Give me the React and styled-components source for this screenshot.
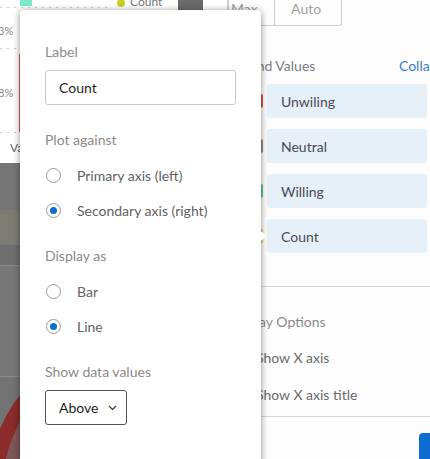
import React from 'react';
import styled, { createGlobalStyle } from 'styled-components';

const GlobalStyle = createGlobalStyle`
  html, body {
    margin: 0;
    padding: 0;
    background: #fff;
  }
  body {
    font-family: Lato, "Noto Sans", "Liberation Sans", sans-serif;
    font-size: 14px;
  }
`;

const Page = styled.div`
  position: relative;
  width: 430px;
  height: 459px;
  overflow: hidden;
  display: grid;
  grid-template-columns: 228px 223px;
  background: #fdfdfd;
`;

const ChartPanel = styled.div`
  display: flex;
  flex-direction: column;
  background: #fff;
`;

const ChartTop = styled.svg`
  display: block;
  width: 228px;
  height: 163px;
  flex: none;
`;

const Dimmed = styled.div`
  flex: 1;
  display: flex;
  flex-direction: column;
  background: #7a7a7a;
`;

const Band = styled.div`
  height: ${p => p.h}px;
  background: ${p => p.c};
  border-bottom: ${p => (p.line ? '1px solid #8a8a8a' : 'none')};
`;

const DonutArea = styled.svg`
  display: block;
  flex: 1;
  width: 228px;
  background: #737373;
`;

const Sidebar = styled.div`
  display: flex;
  flex-direction: column;
  background: #fdfdfd;
  color: #6a6a6a;
`;

const RangeGroup = styled.div`
  display: flex;
  width: 114px;
  height: 26px;
  border: 1px solid #cfcfcf;
  border-top: none;
  border-radius: 0 0 3px 3px;
  box-sizing: border-box;
`;

const RangeCell = styled.div`
  width: ${p => p.w}px;
  box-sizing: border-box;
  padding-left: ${p => p.pl}px;
  line-height: 18px;
  color: #a0a0a0;
  border-right: ${p => (p.divider ? '1px solid #cfcfcf' : 'none')};
`;

const SectionHeader = styled.div`
  display: flex;
  justify-content: space-between;
  align-items: center;
  height: 20px;
  margin-top: 29px;
  color: #7d7d7d;
`;

const LinkText = styled.span`
  color: #3a7fc6;
`;

const LegendList = styled.div`
  display: flex;
  flex-direction: column;
  gap: 11px;
  margin-top: 9px;
  margin-right: 24px;
`;

const LegendRow = styled.div`
  display: flex;
  align-items: center;
  gap: 4px;
  padding-left: 27px;
`;

const Swatch = styled.div`
  width: 8px;
  height: 14px;
  border-radius: 2px;
  background: ${p => p.c};
`;

const LegendItem = styled.div`
  flex: 1;
  height: 34px;
  box-sizing: border-box;
  padding-left: 14px;
  display: flex;
  align-items: center;
  background: #e6f0f8;
  border-radius: 3px;
  color: #4b4b55;
`;

const Divider = styled.div`
  height: 1px;
  background: #d6d6d6;
  margin-top: ${p => p.mt}px;
`;

const SubTitle = styled.div`
  margin-top: 25px;
  line-height: 20px;
  color: #8a8a8a;
`;

const CheckRow = styled.div`
  display: flex;
  align-items: center;
  gap: 14px;
  height: 20px;
  margin-top: ${p => p.mt}px;
  color: #6a6a6a;
`;

const Checkbox = styled.div`
  width: 14px;
  height: 14px;
  border: 1px solid #999;
  border-radius: 2px;
  box-sizing: border-box;
`;

const PrimaryButton = styled.div`
  margin-top: 16px;
  margin-left: 191px;
  width: 40px;
  height: 40px;
  background: #0b6ed0;
  border-radius: 4px;
`;

const Popover = styled.div`
  position: absolute;
  left: 20px;
  top: 10px;
  width: 241px;
  height: 470px;
  box-sizing: border-box;
  padding: 32px 25px 0 25px;
  background: #fff;
  border-radius: 4px 4px 0 0;
  box-shadow: 0 1px 7px rgba(0, 0, 0, 0.45);
  display: flex;
  flex-direction: column;

  &::after {
    content: '';
    position: absolute;
    right: -5px;
    top: 221px;
    border-top: 5px solid transparent;
    border-bottom: 5px solid transparent;
    border-left: 5px solid #fff;
  }
`;

const FieldLabel = styled.div`
  line-height: 20px;
  color: #8a8a8a;
  margin-top: ${p => p.mt || 0}px;
`;

const TextInput = styled.div`
  margin-top: 8px;
  height: 35px;
  box-sizing: border-box;
  border: 1px solid #c9c9c9;
  border-radius: 3px;
  padding-left: 13px;
  display: flex;
  align-items: center;
  color: #1e1e1e;
`;

const RadioGroup = styled.div`
  margin-top: 8px;
  display: flex;
  flex-direction: column;
`;

const RadioRow = styled.label`
  display: flex;
  align-items: center;
  height: 35px;
  gap: 16px;
  padding-left: 1px;
  color: #626262;
`;

const RadioCircle = styled.span`
  width: 15px;
  height: 15px;
  box-sizing: border-box;
  border: 1px solid #9b9b9b;
  border-radius: 50%;
  display: flex;
  align-items: center;
  justify-content: center;

  &::after {
    content: '';
    width: 7px;
    height: 7px;
    border-radius: 50%;
    background: ${p => (p.checked ? '#0b6ed0' : 'transparent')};
  }
`;

const SelectButton = styled.div`
  margin-top: 8px;
  width: 82px;
  height: 35px;
  box-sizing: border-box;
  border: 1px solid #555;
  border-radius: 3px;
  padding-left: 13px;
  display: flex;
  align-items: center;
  gap: 10px;
  color: #1e1e1e;
`;

const Radio = ({ checked, children }) => (
  <RadioRow>
    <RadioCircle checked={checked} />
    {children}
  </RadioRow>
);

const legend = [
  { name: 'Unwiling', color: '#d9534f' },
  { name: 'Neutral', color: '#8c8c8c' },
  { name: 'Willing', color: '#5cc8a0' },
  { name: 'Count', color: '#c5d02a' },
];

const App = () => {
  return (
    <Page>
      <GlobalStyle />
      <ChartPanel>
        <ChartTop viewBox="0 0 228 163">
          <g stroke="#cfcfcf" strokeDasharray="2 5" strokeWidth="1">
            <line x1="0" y1="7.5" x2="110" y2="7.5" />
            <line x1="0" y1="48.5" x2="110" y2="48.5" />
            <line x1="0" y1="132.5" x2="110" y2="132.5" />
          </g>
          <rect x="20" y="0" width="12" height="6" fill="#7eeac9" />
          <rect x="19" y="54" width="3" height="78" fill="#d9534f" />
          <text x="-2" y="35" fontSize="11" fill="#888" fontFamily="Lato, sans-serif">3%</text>
          <text x="-2" y="97" fontSize="11" fill="#888" fontFamily="Lato, sans-serif">8%</text>
          <text x="10" y="152" fontSize="12" fill="#666" fontFamily="Lato, sans-serif">Va</text>
          <circle cx="121" cy="3" r="4" fill="#c5d02a" />
          <text x="130" y="6" fontSize="12" fill="#777" fontFamily="Lato, sans-serif">Count</text>
          <rect x="178" y="0" width="25" height="10" fill="#6c6a6a" />
          <line x1="227.5" y1="0" x2="227.5" y2="26" stroke="#cfcfcf" />
        </ChartTop>
        <Dimmed>
          <Band h={47} c="#767676" />
          <Band h={35} c="#7c7c72" />
          <Band h={20} c="#6e6e6e" line />
          <Band h={110} c="#787878" line />
          <DonutArea viewBox="0 0 228 82" preserveAspectRatio="xMinYMin slice">
            <circle cx="118" cy="95" r="122" stroke="#8b2b2b" strokeWidth="13" fill="none" />
            <circle cx="118" cy="95" r="110" stroke="#7e5656" strokeWidth="11" fill="none" />
          </DonutArea>
        </Dimmed>
      </ChartPanel>

      <Sidebar>
        <RangeGroup>
          <RangeCell w={47} pl={2} divider>Max</RangeCell>
          <RangeCell w={67} pl={16}>Auto</RangeCell>
        </RangeGroup>
        <SectionHeader>
          <span>Legend Values</span>
          <LinkText>Collapse</LinkText>
        </SectionHeader>
        <LegendList>
          {legend.map(item => (
            <LegendRow key={item.name}>
              <Swatch c={item.color} />
              <LegendItem>{item.name}</LegendItem>
            </LegendRow>
          ))}
        </LegendList>
        <Divider mt={33} />
        <SubTitle>Display Options</SubTitle>
        <CheckRow mt={15}>
          <Checkbox />
          Show X axis
        </CheckRow>
        <CheckRow mt={17}>
          <Checkbox />
          Show X axis title
        </CheckRow>
        <Divider mt={12} />
        <PrimaryButton />
      </Sidebar>

      <Popover>
        <FieldLabel>Label</FieldLabel>
        <TextInput>Count</TextInput>

        <FieldLabel mt={25}>Plot against</FieldLabel>
        <RadioGroup>
          <Radio>Primary axis (left)</Radio>
          <Radio checked>Secondary axis (right)</Radio>
        </RadioGroup>

        <FieldLabel mt={18}>Display as</FieldLabel>
        <RadioGroup>
          <Radio>Bar</Radio>
          <Radio checked>Line</Radio>
        </RadioGroup>

        <FieldLabel mt={18}>Show data values</FieldLabel>
        <SelectButton>
          Above
          <svg width="9" height="6" viewBox="0 0 9 6">
            <path d="M1 1 L4.5 4.5 L8 1" stroke="#333" strokeWidth="1.2" fill="none" />
          </svg>
        </SelectButton>
      </Popover>
    </Page>
  );
};

export default App;
